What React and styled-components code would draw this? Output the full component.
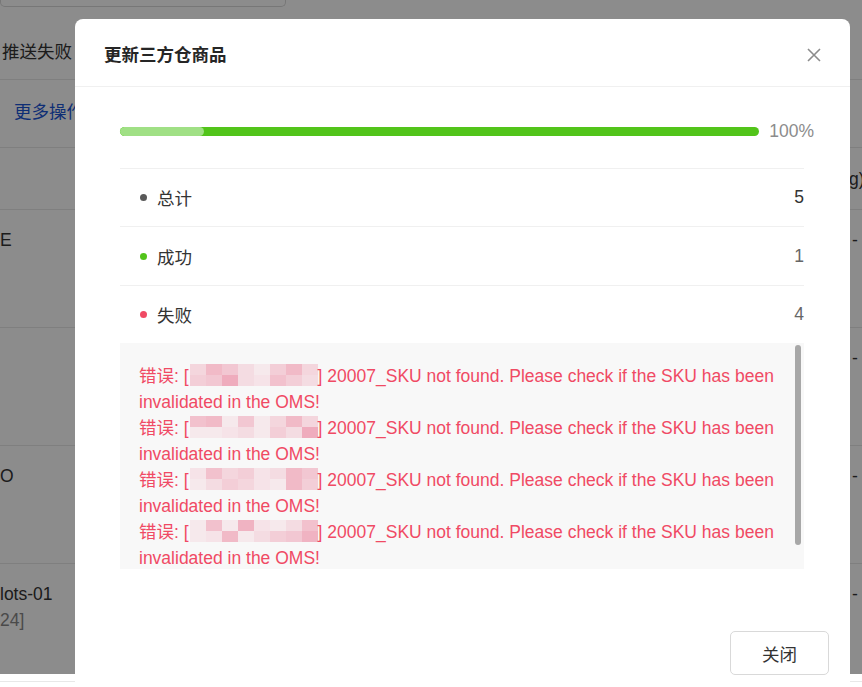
import React from 'react'
import styled, { createGlobalStyle } from 'styled-components'

const GlobalStyle = createGlobalStyle`
  html, body {
    margin: 0;
    padding: 0;
    background: #fff;
  }
  body {
    font-family: "Liberation Sans", "Noto Sans CJK SC", sans-serif;
    color: #333;
  }
`

const stats = [
  { label: '总计', value: 5, dot: '#595959', strong: true },
  { label: '成功', value: 1, dot: '#52c41a' },
  { label: '失败', value: 4, dot: '#f04a64' },
]

// pixelated blur over the hidden SKU names
const mosaics = [
  [0.25, 0.45, 0.35, 0.2, 0.1, 0.3, 0.45, 0.25, 0.3, 0.35, 0.55, 0.2, 0.15, 0.4, 0.3, 0.2],
  [0.4, 0.45, 0.1, 0.35, 0.1, 0.25, 0.45, 0.25, 0.1, 0.1, 0.15, 0.2, 0.1, 0.3, 0.2, 0.55],
  [0.15, 0.4, 0.25, 0.3, 0.15, 0.2, 0.45, 0.35, 0.1, 0.2, 0.3, 0.25, 0.15, 0.1, 0.45, 0.3],
  [0.1, 0.4, 0.1, 0.5, 0.15, 0.1, 0.2, 0.4, 0.1, 0.15, 0.45, 0.1, 0.2, 0.3, 0.35, 0.5],
]

const bgRows = [
  { left: 'E', right: '-' },
  { left: '', right: '-' },
  { left: 'O', right: '-' },
  { left: 'lots-01', sub: '24]', right: '-' },
]

const App = () => {
  return (
    <Page>
      <GlobalStyle />
      <Background>
        <TopInput />
        <FilterRow>推送失败</FilterRow>
        <ActionRow>
          <LinkText>更多操作</LinkText>
        </ActionRow>
        <TableHead>
          <span />
          <RightCell $shift>g)</RightCell>
        </TableHead>
        {bgRows.map((r, i) => (
          <TableRow key={i}>
            <LeftCell>
              <div>{r.left}</div>
              {r.sub && <SubText>{r.sub}</SubText>}
            </LeftCell>
            <RightCell>{r.right}</RightCell>
          </TableRow>
        ))}
      </Background>

      <Mask />

      <Modal>
        <ModalHeader>
          <Title>更新三方仓商品</Title>
          <CloseBtn aria-label="close">
            <svg width="16" height="16" viewBox="0 0 16 16">
              <path d="M2 2 L14 14 M14 2 L2 14" stroke="#8c8c8c" strokeWidth="1.6" fill="none" />
            </svg>
          </CloseBtn>
        </ModalHeader>

        <ModalBody>
          <ProgressWrap>
            <Track>
              <SuccessPart />
            </Track>
            <ProgressText>100%</ProgressText>
          </ProgressWrap>

          <StatList>
            {stats.map((s) => (
              <StatRow key={s.label}>
                <StatLabel>
                  <Dot color={s.dot} />
                  {s.label}
                </StatLabel>
                <StatValue $strong={s.strong}>{s.value}</StatValue>
              </StatRow>
            ))}
          </StatList>

          <ErrorPanel>
            <ErrorBox>
              {mosaics.map((m, i) => (
                <ErrorLine key={i}>
                  错误: [
                  <Mosaic>
                    {m.map((a, j) => (
                      <MosaicCell key={j} $a={a} />
                    ))}
                  </Mosaic>
                  ] 20007_SKU not found. Please check if the SKU has been invalidated in the OMS!
                </ErrorLine>
              ))}
            </ErrorBox>
            <ScrollThumb />
          </ErrorPanel>
        </ModalBody>

        <ModalFooter>
          <Button>关闭</Button>
        </ModalFooter>
      </Modal>
    </Page>
  )
}

export default App

const Page = styled.div`
  position: relative;
  width: 862px;
  height: 687px;
  overflow: hidden;
  background: #fff;
`

const Background = styled.div`
  display: flex;
  flex-direction: column;
  font-size: 17.5px;
  color: #333;
`

const TopInput = styled.div`
  width: 284px;
  height: 6px;
  border: 1px solid #d9d9d9;
  border-top: none;
  border-radius: 0 0 5px 5px;
`

const FilterRow = styled.div`
  height: 73px;
  box-sizing: border-box;
  padding: 32px 0 0 2px;
  line-height: 26px;
  border-bottom: 1px solid #e8e8e8;
`

const ActionRow = styled.div`
  height: 68px;
  box-sizing: border-box;
  padding: 19px 0 0 14px;
  line-height: 26px;
  border-bottom: 1px solid #e8e8e8;
`

const LinkText = styled.span`
  color: #1a55d6;
`

const TableHead = styled.div`
  height: 62px;
  box-sizing: border-box;
  display: flex;
  justify-content: space-between;
  align-items: center;
  border-bottom: 1px solid #e8e8e8;
`

const TableRow = styled.div`
  height: 118px;
  box-sizing: border-box;
  display: flex;
  justify-content: space-between;
  align-items: flex-start;
  padding-top: 17px;
  border-bottom: 1px solid #e8e8e8;
  line-height: 26px;
`

const LeftCell = styled.div`
  padding-left: 0;
`

const SubText = styled.div`
  color: #888;
`

const RightCell = styled.div`
  width: 10px;
  line-height: 26px;
  white-space: nowrap;
  margin-left: ${({ $shift }) => ($shift ? '-3px' : '0')};
  padding-right: ${({ $shift }) => ($shift ? '3px' : '0')};
`

const Mask = styled.div`
  position: absolute;
  top: 0;
  left: 0;
  right: 0;
  height: 674px;
  background: rgba(0, 0, 0, 0.45);
`

const Modal = styled.div`
  position: absolute;
  top: 19px;
  left: 75px;
  width: 775px;
  height: 690px;
  background: #fff;
  border-radius: 8px;
  display: flex;
  flex-direction: column;
`

const ModalHeader = styled.div`
  height: 68px;
  box-sizing: border-box;
  padding: 0 27px 0 30px;
  display: flex;
  align-items: center;
  justify-content: space-between;
  border-bottom: 1px solid #f0f0f0;
`

const Title = styled.div`
  font-size: 17.5px;
  font-weight: bold;
  color: #262626;
  padding-top: 1px;
  margin-left: -1px;
`

const CloseBtn = styled.button`
  border: none;
  background: none;
  padding: 0;
  width: 18px;
  height: 18px;
  display: flex;
  align-items: center;
  justify-content: center;
  margin-top: 4px;
`

const ModalBody = styled.div`
  padding: 31px 46px 0 45px;
`

const ProgressWrap = styled.div`
  display: flex;
  align-items: center;
  margin-right: -10px;
  height: 26px;
`

const Track = styled.div`
  position: relative;
  flex: 1;
  height: 9px;
  border-radius: 100px;
  background: #52c41a;
  overflow: hidden;
`

const SuccessPart = styled.div`
  width: 84px;
  height: 100%;
  border-radius: 100px;
  background: #a0e085;
`

const ProgressText = styled.div`
  margin-left: 10px;
  font-size: 17.5px;
  color: #8c8c8c;
  line-height: 26px;
`

const StatList = styled.div`
  margin-top: 24px;
`

const StatRow = styled.div`
  height: 58.4px;
  box-sizing: border-box;
  display: flex;
  align-items: center;
  justify-content: space-between;
  border-top: 1px solid #f0f0f0;
  padding-left: 20px;
  font-size: 17.5px;
`

const StatLabel = styled.div`
  display: flex;
  align-items: center;
  color: #333;
`

const Dot = styled.span`
  width: 7px;
  height: 7px;
  border-radius: 50%;
  background: ${({ color }) => color};
  margin-right: 10px;
`

const StatValue = styled.div`
  color: ${({ $strong }) => ($strong ? '#333' : '#666')};
`

const ErrorPanel = styled.div`
  position: relative;
  height: 226px;
  background: #f8f8f8;
`

const ErrorBox = styled.div`
  height: 100%;
  box-sizing: border-box;
  overflow: hidden;
  padding: 20px 26px 24px 19px;
`

const ScrollThumb = styled.div`
  position: absolute;
  top: 2px;
  right: 3px;
  width: 6px;
  height: 200px;
  border-radius: 3px;
  background: #a8a8a8;
`

const ErrorLine = styled.div`
  font-size: 17.5px;
  line-height: 26px;
  color: #f04a64;
`

const Mosaic = styled.span`
  display: inline-grid;
  grid-template-columns: repeat(8, 16px);
  grid-template-rows: repeat(2, 11px);
  vertical-align: top;
  margin: 1px 0 0 1px;
`

const MosaicCell = styled.span`
  background: rgba(232, 110, 140, ${({ $a }) => $a});
`

const ModalFooter = styled.div`
  display: flex;
  justify-content: flex-end;
  padding: 62px 21px 0 0;
`

const Button = styled.button`
  width: 99px;
  height: 44px;
  border: 1px solid #d9d9d9;
  border-radius: 5px;
  background: #fff;
  font-family: "Liberation Sans", "Noto Sans CJK SC", sans-serif;
  font-size: 17.5px;
  color: #333;
`
